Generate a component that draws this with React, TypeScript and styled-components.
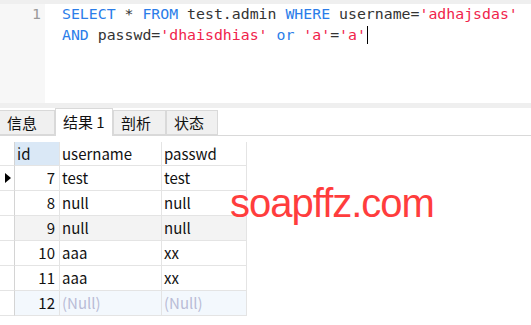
import React from "react";
import styled, { createGlobalStyle } from "styled-components";

const Global = createGlobalStyle`
  html, body { margin: 0; padding: 0; background: #fff; }
  body { width: 531px; height: 325px; overflow: hidden; }
`;

const Page = styled.div`
  position: relative;
  width: 531px;
  height: 325px;
  background: #fff;
  font-family: "Noto Sans CJK SC", "Noto Sans", sans-serif;
`;

const Editor = styled.div`
  display: flex;
  height: 99px;
  border-top: 4px solid #efefef;
`;

const Gutter = styled.div`
  width: 45px;
  background: #f7f7f7;
  box-sizing: border-box;
  padding-right: 4px;
  text-align: right;
  color: #9a9a9a;
  font-family: "DejaVu Sans Mono", monospace;
  font-size: 14.85px;
  line-height: 21px;
`;

const Code = styled.div`
  flex: 1;
  padding-left: 17px;
  font-family: "DejaVu Sans Mono", monospace;
  font-size: 14.85px;
  line-height: 21px;
  color: #333;
  white-space: pre;
`;

const Kw = styled.span`
  color: #2b7de9;
`;
const Str = styled.span`
  color: #f0234b;
`;
const Caret = styled.span`
  display: inline-block;
  width: 1px;
  height: 18px;
  background: #000;
  vertical-align: -4px;
  margin-left: 1px;
`;

const Splitter = styled.div`
  height: 5px;
  background: #efefef;
`;

const TabBar = styled.div`
  display: flex;
  align-items: flex-end;
  height: 27px;
  border-bottom: 1px solid #d9d9d9;
`;

const Tab = styled.div<{ $active?: boolean; $first?: boolean; $w: number }>`
  box-sizing: border-box;
  width: ${(p) => p.$w}px;
  height: ${(p) => (p.$active ? 28 : 25)}px;
  margin-bottom: ${(p) => (p.$active ? -1 : 0)}px;
  background: ${(p) => (p.$active ? "#fff" : "#f0f0f0")};
  border: 1px solid #d9d9d9;
  border-bottom: ${(p) => (p.$active ? "none" : "1px solid #d9d9d9")};
  border-left: ${(p) => (p.$first ? "none" : "1px solid #d9d9d9")};
  padding-left: 7px;
  font-size: 15px;
  line-height: ${(p) => (p.$active ? 26 : 23)}px;
  color: #111;
`;

const Grid = styled.div`
  margin-top: 6px;
  display: flex;
  flex-direction: column;
  width: 247px;
`;

const Row = styled.div<{ $bg?: string; $h?: number }>`
  display: flex;
  height: ${(p) => p.$h ?? 25}px;
  background: ${(p) => p.$bg ?? "#fff"};
`;

const Cell = styled.div<{ $w: number; $right?: boolean; $bg?: string; $muted?: boolean }>`
  box-sizing: border-box;
  width: ${(p) => p.$w}px;
  border-right: 1px solid #e4e4e4;
  border-bottom: 1px solid #e4e4e4;
  background: ${(p) => p.$bg ?? "transparent"};
  padding: ${(p) => (p.$right ? "0 4px 0 0" : "0 0 0 2px")};
  text-align: ${(p) => (p.$right ? "right" : "left")};
  font-size: 15px;
  line-height: 24px;
  color: ${(p) => (p.$muted ? "#b9bcd6" : "#111")};
  white-space: nowrap;
  overflow: hidden;
`;

const Indicator = styled.div`
  box-sizing: border-box;
  width: 15px;
  border-right: 1px solid #d4d4d4;
  border-bottom: 1px solid #e4e4e4;
  background: #fff;
  display: flex;
  align-items: center;
  padding-left: 5px;
`;

const Triangle = styled.div`
  width: 0;
  height: 0;
  border-top: 5px solid transparent;
  border-bottom: 5px solid transparent;
  border-left: 6px solid #000;
`;

const Watermark = styled.div`
  position: absolute;
  left: 230px;
  top: 181px;
  font-family: "Liberation Sans", Arial, sans-serif;
  font-size: 40px;
  letter-spacing: -1px;
  line-height: 44px;
  color: #ff3d3d;
`;

type R = { id: number; u: string; p: string; bg?: string; sel?: boolean; nul?: boolean };
const rows: R[] = [
  { id: 7, u: "test", p: "test", sel: true },
  { id: 8, u: "null", p: "null" },
  { id: 9, u: "null", p: "null", bg: "#f3f3f3" },
  { id: 10, u: "aaa", p: "xx" },
  { id: 11, u: "aaa", p: "xx" },
  { id: 12, u: "(Null)", p: "(Null)", bg: "#f3f8fd", nul: true },
];

export default function App() {
  return (
    <Page>
      <Global />
      <Editor>
        <Gutter>1</Gutter>
        <Code>
          <Kw>SELECT</Kw> * <Kw>FROM</Kw> test.admin <Kw>WHERE</Kw> username=<Str>'adhajsdas'</Str>
          {"\n"}
          <Kw>AND</Kw> passwd=<Str>'dhaisdhias'</Str> <Kw>or</Kw> <Str>'a'</Str>=<Str>'a'</Str>
          <Caret />
        </Code>
      </Editor>
      <Splitter />
      <TabBar>
        <Tab $w={55} $first>信息</Tab>
        <Tab $w={58} $active>结果 1</Tab>
        <Tab $w={53}>剖析</Tab>
        <Tab $w={52}>状态</Tab>
      </TabBar>
      <Grid>
        <Row $h={24}>
          <Indicator />
          <Cell $w={45} $bg="#dae8f6">id</Cell>
          <Cell $w={102}>username</Cell>
          <Cell $w={85}>passwd</Cell>
        </Row>
        {rows.map((r) => (
          <Row key={r.id} $bg={r.bg}>
            <Indicator>{r.sel && <Triangle />}</Indicator>
            <Cell $w={45} $right>
              {r.id}
            </Cell>
            <Cell $w={102} $muted={r.nul}>
              {r.u}
            </Cell>
            <Cell $w={85} $muted={r.nul}>
              {r.p}
            </Cell>
          </Row>
        ))}
      </Grid>
      <Watermark>soapffz.com</Watermark>
    </Page>
  );
}
